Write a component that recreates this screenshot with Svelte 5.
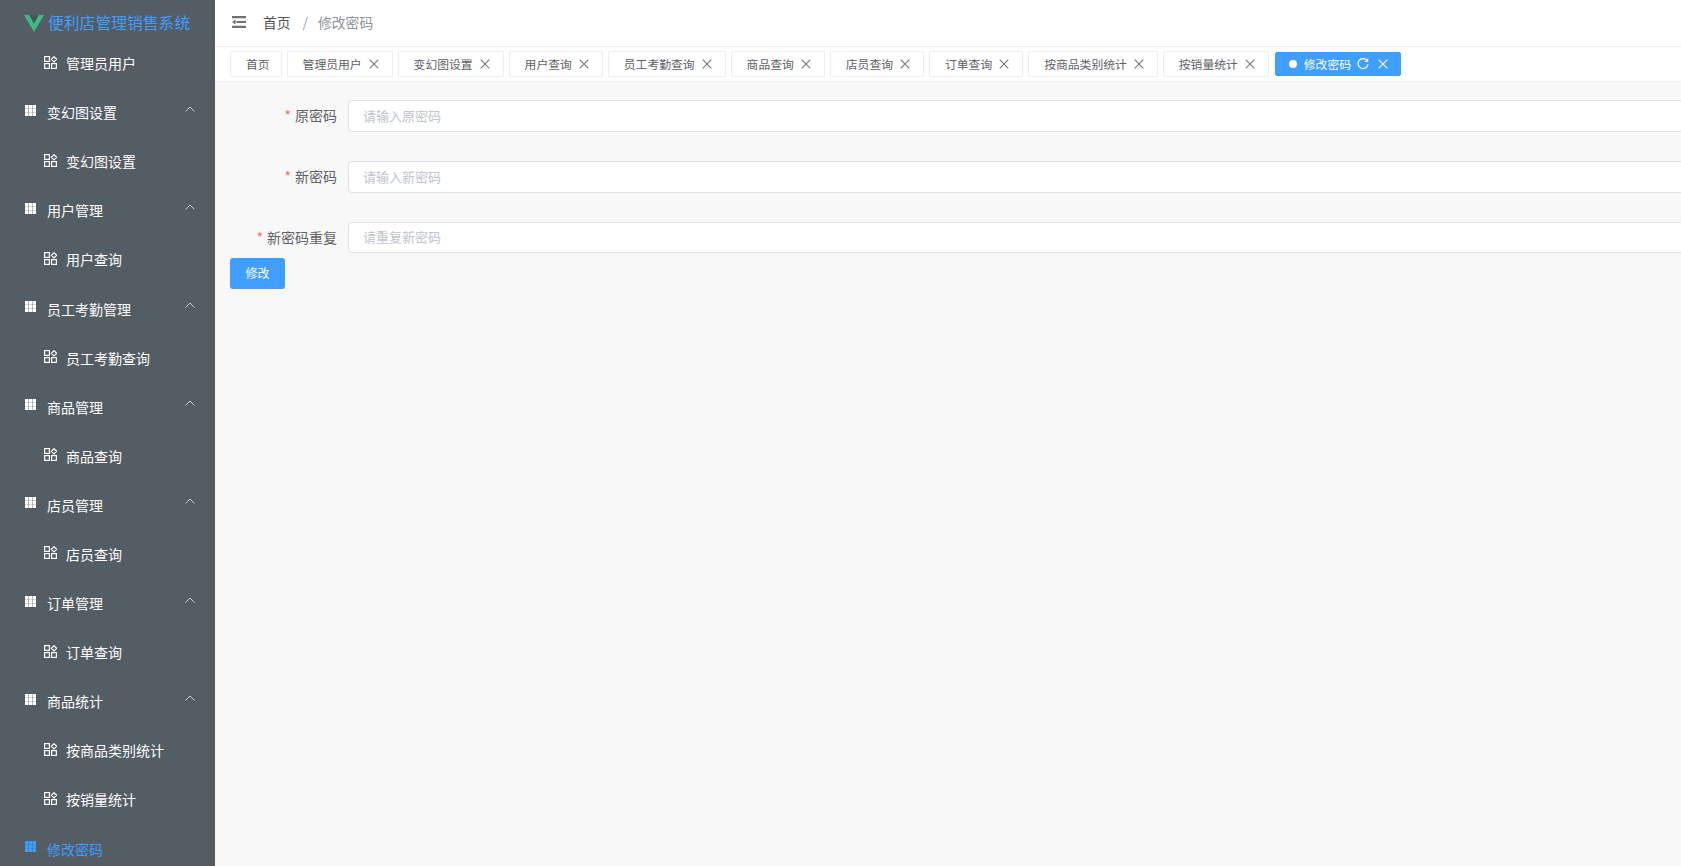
<script lang="ts">
  const groups = [
    { title: '变幻图设置', items: ['变幻图设置'] },
    { title: '用户管理', items: ['用户查询'] },
    { title: '员工考勤管理', items: ['员工考勤查询'] },
    { title: '商品管理', items: ['商品查询'] },
    { title: '店员管理', items: ['店员查询'] },
    { title: '订单管理', items: ['订单查询'] },
    { title: '商品统计', items: ['按商品类别统计', '按销量统计'] },
  ];

  const tabs = [
    '管理员用户',
    '变幻图设置',
    '用户查询',
    '员工考勤查询',
    '商品查询',
    '店员查询',
    '订单查询',
    '按商品类别统计',
    '按销量统计',
  ];

  const fields = [
    { label: '原密码', placeholder: '请输入原密码' },
    { label: '新密码', placeholder: '请输入新密码' },
    { label: '新密码重复', placeholder: '请重复新密码' },
  ];
</script>

{#snippet gridIcon()}
  <svg class="grid-icon" viewBox="0 0 11 11" fill="currentColor">
    <path d="M0 0h3.400v3.400H0zM3.800 0h3.400v3.400H3.800zM7.600 0H11v3.400H7.600zM0 3.800h3.400v3.400H0zM3.800 3.800h3.400v3.400H3.800zM7.600 3.800H11v3.400H7.600zM0 7.600h3.400V11H0zM3.800 7.600h3.400V11H3.800zM7.600 7.600H11V11H7.600z" />
  </svg>
{/snippet}

{#snippet subIcon()}
  <svg class="sub-icon" viewBox="0 0 13 13" fill="none" stroke="currentColor" stroke-width="1.200">
    <rect x="0.600" y="0.600" width="4.800" height="4.800" />
    <path d="M10 0.700l2.600 2.600L10 5.900 7.400 3.300z" />
    <rect x="0.600" y="7.600" width="4.800" height="4.800" />
    <rect x="7.600" y="7.600" width="4.800" height="4.800" />
  </svg>
{/snippet}

{#snippet closeIcon()}
  <svg class="close-icon" viewBox="0 0 10 10" fill="none" stroke="currentColor" stroke-width="1.100">
    <path d="M0.700 0.700l8.600 8.600M9.300 0.700l-8.600 8.600" />
  </svg>
{/snippet}

<div class="layout">
  <aside class="sidebar">
    <div class="logo">
      <svg class="logo-mark" viewBox="0 0 20 17">
        <path d="M0 0h5.500L10 8.500 14.500 0H20L10 17z" fill="#42b883" />
        <path d="M5.500 0h2.500L10 3.500 12 0h2.500L10 8.500z" fill="#46525f" />
      </svg>
      <span>便利店管理销售系统</span>
    </div>
    <ul class="menu">
      <li class="row sub">{@render subIcon()}<span>管理员用户</span></li>
      {#each groups as group}
        <li class="row group">
          {@render gridIcon()}<span>{group.title}</span>
          <svg class="chevron" viewBox="0 0 10 6" fill="none" stroke="currentColor" stroke-width="1">
            <path d="M0.500 5.500L5 1l4.500 4.500" />
          </svg>
        </li>
        {#each group.items as item}
          <li class="row sub">{@render subIcon()}<span>{item}</span></li>
        {/each}
      {/each}
      <li class="row group active">{@render gridIcon()}<span>修改密码</span></li>
    </ul>
  </aside>

  <div class="content">
    <header class="navbar">
      <svg class="fold" viewBox="0 0 14 12" fill="#6e7175">
        <path d="M0 0h14v2.200H0zM4.500 4.900H14v2.200H4.500zM0 9.800h14V12H0zM3.600 3.400v5.200L0 6z" />
      </svg>
      <span class="crumb">首页</span>
      <span class="crumb-sep">/</span>
      <span class="crumb-current">修改密码</span>
    </header>

    <nav class="tabs">
      <span class="tab home"><span class="tab-text">首页</span></span>
      {#each tabs as tab}
        <span class="tab"><span class="tab-text">{tab}</span>{@render closeIcon()}</span>
      {/each}
      <span class="tab current">
        <i class="dot"></i><span class="tab-text">修改密码</span>
        <svg class="refresh" viewBox="0 0 12 12" fill="none" stroke="currentColor" stroke-width="1.200">
          <path d="M10.300 3A5 5 0 1 0 11 6" />
          <path d="M10.600 0.600V3.400H7.800" />
        </svg>
        {@render closeIcon()}
      </span>
    </nav>

    <main class="page">
      <form class="form">
        {#each fields as field}
          <div class="form-row">
            <label class="form-label"><em>*</em>{field.label}</label>
            <input class="form-input" type="password" placeholder={field.placeholder} />
          </div>
        {/each}
        <button type="button" class="submit">修改</button>
      </form>
    </main>
  </div>
</div>

<style>
  :global(body) {
    margin: 0;
    font-family: "Noto Sans CJK SC", "Noto Sans", sans-serif;
  }

  .layout {
    display: flex;
    width: 1681px;
    height: 866px;
    overflow: hidden;
  }

  .sidebar {
    flex: 0 0 215px;
    background-color: #545c64;
    overflow: hidden;
  }

  .logo {
    display: flex;
    align-items: center;
    height: 38.500px;
    padding: 7px 0 0 24px;
    box-sizing: border-box;
    gap: 4px;
    font-size: 15.800px;
    color: #409eff;
    white-space: nowrap;
  }

  .logo-mark {
    width: 20px;
    height: 17px;
    flex-shrink: 0;
    margin-top: 2px;
  }

  .menu {
    list-style: none;
    margin: 0;
    padding: 0;
  }

  .row {
    display: flex;
    align-items: center;
    height: 49.100px;
    font-size: 14px;
    color: #fff;
    white-space: nowrap;
  }

  .group {
    padding-left: 25px;
  }

  .group > span {
    margin-left: 11px;
  }

  .sub {
    padding-left: 44px;
  }

  .sub > span {
    margin-left: 9px;
  }

  .active {
    color: #409eff;
  }

  .grid-icon {
    width: 11px;
    height: 11px;
    margin-top: -4px;
    flex-shrink: 0;
  }

  .sub-icon {
    width: 13px;
    height: 13px;
    margin-top: -2px;
    flex-shrink: 0;
  }

  .chevron {
    width: 10px;
    height: 6px;
    margin-left: auto;
    margin-right: 20px;
    margin-top: -7px;
    color: #ccd0d4;
  }

  .content {
    flex: 1;
    min-width: 0;
    display: flex;
    flex-direction: column;
    background-color: #f8f8f8;
  }

  .navbar {
    display: flex;
    align-items: center;
    flex: 0 0 47px;
    box-sizing: border-box;
    padding: 0 0 2px 17px;
    background-color: #fff;
    border-bottom: 1px solid #ebeef5;
    font-size: 13.800px;
  }

  .fold {
    width: 14px;
    height: 12px;
    margin-right: 17px;
  }

  .crumb {
    color: #555;
  }

  .crumb-sep {
    margin: 0 10px 0 12px;
    color: #a0a4ab;
  }

  .crumb-current {
    color: #909399;
  }

  .tabs {
    display: flex;
    align-items: center;
    gap: 5px;
    flex: 0 0 35px;
    box-sizing: border-box;
    padding-left: 15px;
    background-color: #fff;
    border-bottom: 1px solid #ebeef5;
  }

  .tab {
    display: flex;
    align-items: center;
    height: 26px;
    box-sizing: border-box;
    padding: 0 13px 0 15px;
    background-color: #fff;
    border: 1px solid #ebeef5;
    border-radius: 2px;
    font-size: 11.800px;
    color: #606266;
    white-space: nowrap;
  }

  .tab-text {
    margin-top: -2px;
  }

  .home {
    padding-right: 11px;
  }

  .close-icon {
    width: 10px;
    height: 10px;
    margin-left: 7px;
    color: #777;
  }

  .current {
    height: 24px;
    margin-left: 1px;
    padding: 0 12px 0 13px;
    background-color: #409eff;
    border-color: #409eff;
    color: #fff;
  }

  .current .close-icon {
    margin-left: 9px;
    color: #fff;
  }

  .dot {
    width: 8px;
    height: 8px;
    margin-right: 7px;
    border-radius: 50%;
    background-color: #fff;
  }

  .refresh {
    width: 12px;
    height: 12px;
    margin-left: 6px;
  }

  .page {
    flex: 1;
    padding: 18px 0 0 15px;
  }

  .form-row {
    display: flex;
    align-items: center;
    height: 32px;
    margin-bottom: 29px;
  }

  .form-row:last-of-type {
    height: 31px;
    margin-bottom: 5px;
  }

  .form-label {
    flex: 0 0 107px;
    text-align: right;
    font-size: 14px;
    color: #606266;
    margin: -2px 11px 0 0;
  }

  .form-label em {
    font-style: normal;
    color: #f56c6c;
    margin-right: 4px;
  }

  .form-input {
    flex: 0 0 1400px;
    height: 100%;
    box-sizing: border-box;
    padding: 0 14px 2px;
    border: 1px solid #dcdfe6;
    border-radius: 4px;
    background-color: #fff;
    font-family: inherit;
    font-size: 13px;
    outline: none;
  }

  .form-input::placeholder {
    color: #c0c4cc;
  }

  .submit {
    display: block;
    width: 55px;
    height: 31px;
    padding: 0 0 2px;
    border: none;
    border-radius: 3px;
    background-color: #409eff;
    font-family: inherit;
    font-size: 12px;
    color: #fff;
  }
</style>
